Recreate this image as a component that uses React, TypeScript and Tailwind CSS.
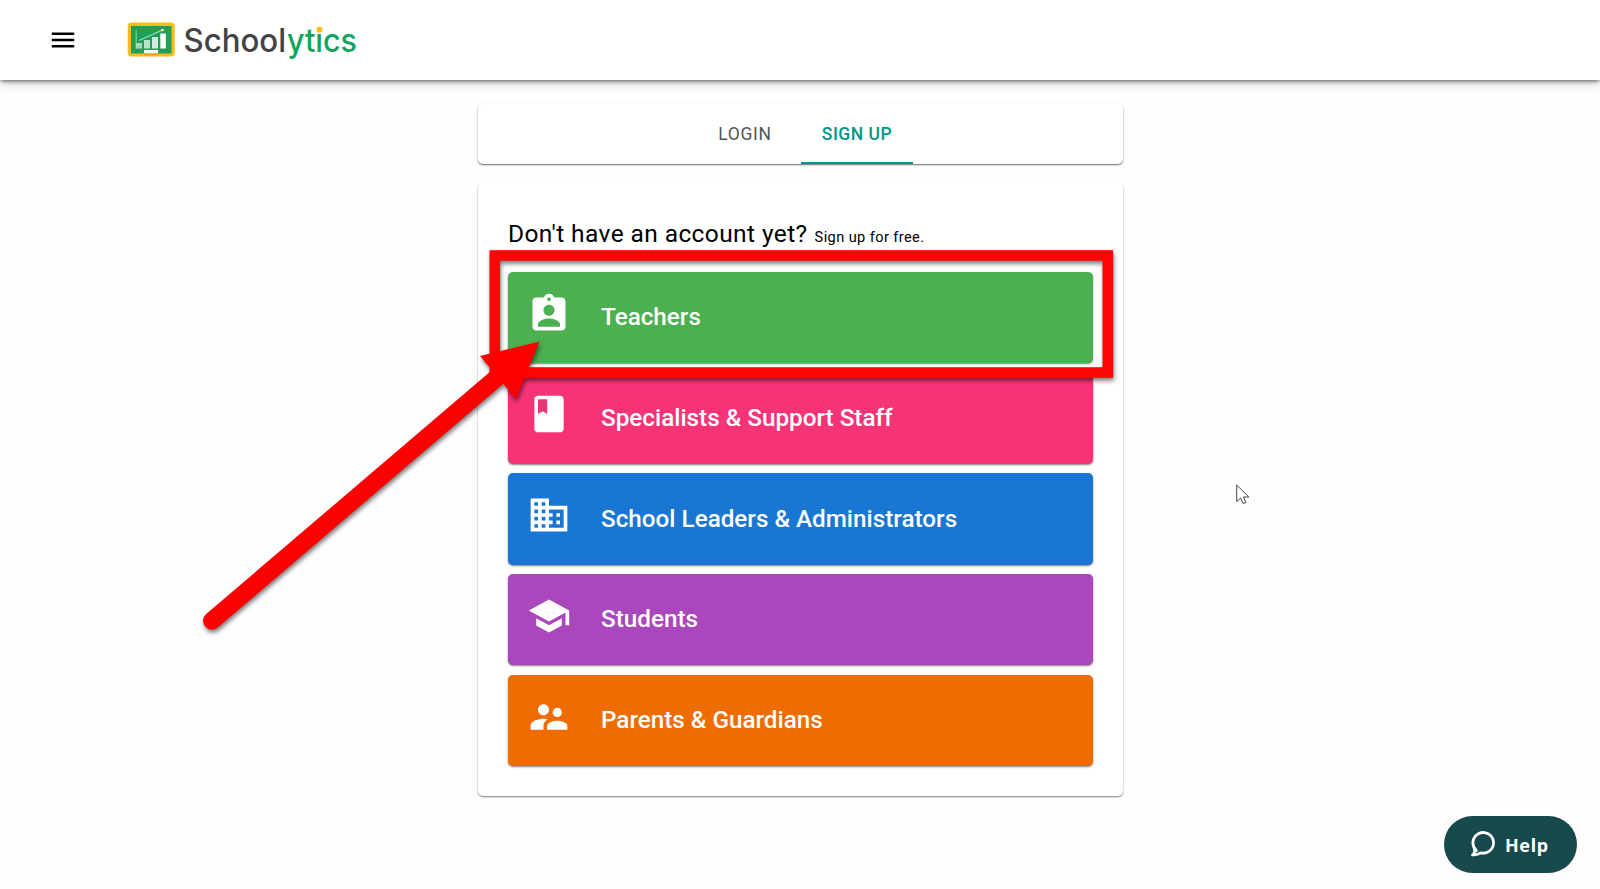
import React from 'react';
import { MdMenu, MdAssignmentInd, MdClass, MdDomain, MdSchool, MdSupervisorAccount } from 'react-icons/md';

const roles = [
  { label: 'Teachers', icon: MdAssignmentInd, color: 'bg-[#4caf50]' },
  { label: 'Specialists & Support Staff', icon: MdClass, color: 'bg-[#f73378]' },
  { label: 'School Leaders & Administrators', icon: MdDomain, color: 'bg-[#1976d2]' },
  { label: 'Students', icon: MdSchool, color: 'bg-[#ab47bc]' },
  { label: 'Parents & Guardians', icon: MdSupervisorAccount, color: 'bg-[#ef6c00]' },
];

function Logo() {
  return (
    <svg width="236" height="48" viewBox="0 0 236 48" className="block">
      <rect x="0.7" y="6.600" width="47" height="34" rx="4" fill="#fbbc13" />
      <rect x="4" y="10" width="40.500" height="27.500" fill="#1e9f5c" />
      <path d="M9.200 14v19" stroke="#7cc8a0" strokeWidth="1.200" />
      <path d="M12 24.500L35.500 14" stroke="#a5d9bd" strokeWidth="1.300" />
      <circle cx="35.500" cy="14" r="1.300" fill="#e3f4ea" />
      <rect x="9" y="27" width="6" height="5.500" fill="#a5d9bd" />
      <rect x="17" y="24" width="6" height="8.500" fill="#b9e1cb" />
      <rect x="25" y="21" width="6" height="11.500" fill="#d2ecde" />
      <rect x="33.300" y="17.500" width="5.500" height="15" fill="#fff" />
      <rect x="17" y="34" width="14" height="3.500" fill="#fff" />
      <rect x="17" y="37.500" width="14" height="1.800" fill="#e0a70f" />
      <g fontFamily="Inter, sans-serif" fontSize="32" fontWeight="500">
        <text x="56.500" y="35.600" fill="#434345" textLength="102.500" lengthAdjust="spacingAndGlyphs">
          School
        </text>
        <text x="160" y="35.600" fill="#12a45f" textLength="70" lengthAdjust="spacingAndGlyphs">
          ytics
        </text>
      </g>
      <circle cx="192.500" cy="13.800" r="3" fill="#fbbc13" />
    </svg>
  );
}

function Header() {
  return (
    <header className="flex h-20 items-center bg-white pl-12 shadow-[0_2px_4px_-1px_rgba(0,0,0,0.35),0_4px_10px_rgba(0,0,0,0.16),0_1px_4px_rgba(0,0,0,0.3)]">
      <button className="mr-[49px]">
        <MdMenu className="size-[30px]" />
      </button>
      <Logo />
    </header>
  );
}

function Tabs() {
  return (
    <div className="flex h-[60px] justify-center rounded-[5px] bg-white pl-[1px] text-[17.5px] tracking-[0.65px] shadow-[0_1px_2px_rgba(0,0,0,0.45),0_1px_1px_rgba(0,0,0,0.2)]">
      <button className="w-[112px] text-[#555]">LOGIN</button>
      <button className="w-[112px] border-b-2 border-[#009688] pt-0.5 font-medium tracking-[0.5px] text-[#009688]">
        SIGN UP
      </button>
    </div>
  );
}

// Red frame and arrow pointing at the teachers option
function Highlight() {
  return (
    <svg
      width="1600"
      height="889"
      className="pointer-events-none absolute left-0 top-0 drop-shadow-[1px_3px_2px_rgba(0,0,0,0.5)]"
    >
      <rect x="494.800" y="255.500" width="613" height="117" fill="none" stroke="#ff0505" strokeWidth="10.600" />
      <path d="M212 620.800L500 375" stroke="#fb0200" strokeWidth="17.800" strokeLinecap="round" />
      <path d="M539.500 341.500L480 356L516 399Z" fill="#fb0200" />
    </svg>
  );
}

function Cursor() {
  return (
    <svg width="16" height="22" viewBox="0 0 16 22" className="absolute left-[1236px] top-[484px]">
      <path
        d="M.7 1V17.500L4.600 14L7.200 19.600L9.800 18.400L7.400 13H12.800Z"
        fill="#fff"
        stroke="#444"
        strokeWidth="1"
      />
    </svg>
  );
}

function HelpButton() {
  return (
    <button className="fixed bottom-[16.5px] right-[23.5px] flex h-[57px] w-[133px] items-center rounded-full bg-[#17494d] pl-[26.5px] font-['Noto_Sans'] text-[18px] font-bold tracking-[0.6px] text-white">
      <svg width="26" height="28" viewBox="0 0 26 28" fill="none" className="mr-[9px]">
        <path
          d="M6.300 20.500A10.300 10.300 0 1 1 10.500 22.800C8.500 24.500 5.500 25.200 2.500 24.800C4.500 23.500 5.500 22 4.200 18.500"
          stroke="#fff"
          strokeWidth="2.800"
          strokeLinecap="round"
          strokeLinejoin="round"
        />
      </svg>
      <span className="pt-[3px]">Help</span>
    </button>
  );
}

export default function App() {
  return (
    <div className="relative h-[889px] overflow-hidden bg-[#fefefe] font-[Roboto,sans-serif] text-black">
      <Header />
      <main className="ml-[478px] mt-6 flex w-[645px] flex-col gap-[19px]">
        <Tabs />
        <section className="h-[613px] rounded-[5px] bg-white px-[30px] pt-[34px] shadow-[0_1px_2px_rgba(0,0,0,0.4),0_1px_1px_rgba(0,0,0,0.15)]">
          <h1 className="mb-[20.5px] flex h-[34px] items-baseline whitespace-nowrap text-[24.5px] leading-[34px] tracking-[0.4px]">
            Don't have an account yet?
            <span className="ml-[7px] text-[14.6px] tracking-[0.4px]">Sign up for free.</span>
          </h1>
          <div className="flex flex-col gap-[9.3px]">
            {roles.map(({ label, icon: Icon, color }) => (
              <button
                key={label}
                className={`${color} flex h-[91.5px] w-full items-center rounded-[5px] pl-[19px] text-left text-[24.25px] font-medium text-white shadow-[0_1px_2px_rgba(0,0,0,0.5)]`}
              >
                <Icon className="mb-[7.5px] mr-[30px] size-[44px] shrink-0" />
                {label}
              </button>
            ))}
          </div>
        </section>
      </main>
      <Highlight />
      <Cursor />
      <HelpButton />
    </div>
  );
}
